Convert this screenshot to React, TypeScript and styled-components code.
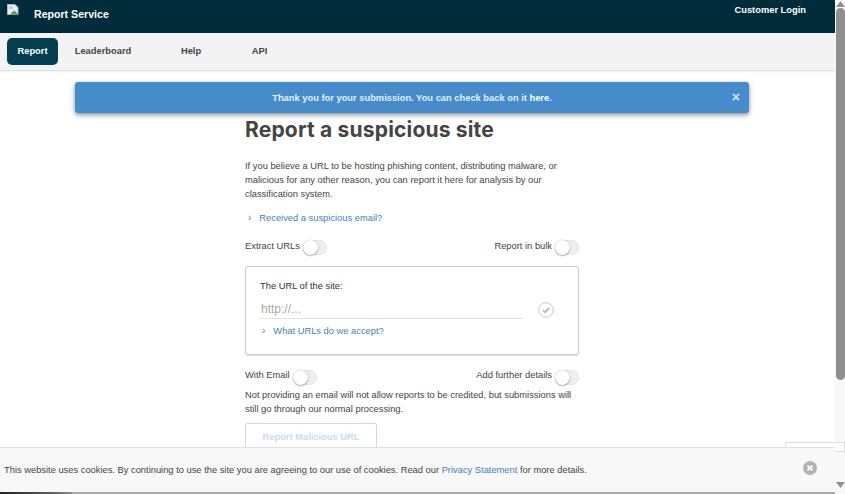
import React from "react";
import styled, { createGlobalStyle } from "styled-components";

const Global = createGlobalStyle`
  html, body { margin: 0; padding: 0; height: 100%; overflow: hidden; background: #fff; }
  * { box-sizing: border-box; }
  body { font-family: "Liberation Sans", Arial, sans-serif; font-size: 9.33px; color: #444; }
`;

const Page = styled.div`
  position: relative;
  display: flex;
  width: 845px;
  height: 494px;
  overflow: hidden;
`;
const Main = styled.div`
  width: 835px;
  display: flex;
  flex-direction: column;
  flex: none;
`;
const Header = styled.header`
  height: 33px;
  flex: none;
  background: #012c3b;
  display: flex;
  justify-content: space-between;
  color: #fff;
  font-weight: 700;
  padding: 0 29px 0 7px;
`;
const Brand = styled.div`
  display: flex;
  align-items: flex-start;
  gap: 11px;
  font-size: 10.6px;
  line-height: 12px;
  padding-top: 7.5px;
`;
const BrokenImg = styled.svg`
  width: 16px;
  height: 11px;
  margin-top: -3.5px;
  flex: none;
`;
const Login = styled.div`
  font-size: 9.33px;
  line-height: 12px;
  padding-top: 4px;
`;
const Nav = styled.nav`
  height: 38px;
  flex: none;
  background: #f3f3f3;
  border-bottom: 1px solid #e2e2e2;
  box-shadow: 0 1px 2px rgba(0, 0, 0, 0.06);
  display: flex;
  align-items: flex-start;
  padding: 5px 0 0 7px;
  font-size: 9.33px;
  font-weight: 700;
`;
const Tab = styled.div<{ $w: number; $active?: boolean }>`
  width: ${(p) => p.$w}px;
  height: 27px;
  line-height: 27px;
  text-align: center;
  border-radius: 5px;
  color: ${(p) => (p.$active ? "#fff" : "#444")};
  background: ${(p) => (p.$active ? "#033e51" : "transparent")};
`;
const Content = styled.main`
  width: 334px;
  margin-left: 245px;
  padding-top: 46px;
  line-height: 14px;
`;
const Title = styled.h1`
  margin: 0;
  font-family: "Inter", "Liberation Sans", sans-serif;
  font-weight: 700;
  font-size: 21px;
  line-height: 26px;
  letter-spacing: 0.18px;
  color: #444;
  white-space: nowrap;
`;
const Para = styled.p`
  margin: 16px 0 0;
  color: #444;
  white-space: nowrap;
`;
const MoreLink = styled.div<{ $indent: number; $top: number; $gap: number }>`
  display: flex;
  align-items: center;
  gap: ${(p) => p.$gap}px;
  margin: ${(p) => p.$top}px 0 0 ${(p) => p.$indent}px;
  color: #3f7fc0;
  line-height: 12px;
`;
const Chevron = styled.span`
  color: #777;
  font-size: 10px;
  line-height: 10px;
`;
const ToggleRow = styled.div<{ $top: number; $h: number }>`
  display: flex;
  justify-content: space-between;
  margin-top: ${(p) => p.$top}px;
  height: ${(p) => p.$h}px;
`;
const ToggleField = styled.label<{ $lift?: boolean }>`
  display: flex;
  align-items: flex-start;
  gap: 3px;
  line-height: 14px;
`;
const Switch = styled.span<{ $drop: number }>`
  display: block;
  position: relative;
  width: 24px;
  height: 15px;
  margin-top: ${(p) => p.$drop}px;
  border-radius: 8px;
  background: #eee;
  border: 1px solid #e4e4e4;
  &::after {
    content: "";
    position: absolute;
    left: -1px;
    top: -1px;
    width: 15px;
    height: 15px;
    border-radius: 50%;
    background: #fff;
    box-shadow: 0 1px 1.5px rgba(0, 0, 0, 0.28), 0 0 0 0.5px rgba(0, 0, 0, 0.14);
  }
`;
const UrlCard = styled.section`
  margin-top: 10px;
  height: 89px;
  border: 1px solid #c8c8c8;
  border-radius: 3px;
  box-shadow: 0 1px 1px rgba(0, 0, 0, 0.12);
  padding: 12px 14px 0;
`;
const CardLabel = styled.div`
  line-height: 14px;
  color: #333;
`;
const InputRow = styled.div`
  display: flex;
  align-items: center;
  gap: 15px;
  margin-top: 5px;
`;
const UrlInput = styled.div`
  width: 263px;
  height: 21px;
  border-bottom: 1px solid #e2e2e2;
  color: #a8a8a8;
  font-size: 12px;
  line-height: 22px;
  padding-left: 1px;
`;
const CheckIcon = styled.svg`
  width: 16px;
  height: 16px;
  flex: none;
  margin-top: 2px;
`;
const Note = styled.p`
  margin: 1px 0 0;
  line-height: 14px;
  color: #444;
  white-space: nowrap;
`;
const SubmitBtn = styled.button`
  display: block;
  margin-top: 7px;
  width: 132px;
  height: 28px;
  background: #fff;
  border: 1px solid #c5dcef;
  border-radius: 2px;
  color: #c5dcef;
  font: 700 9.33px "Liberation Sans", Arial, sans-serif;
  padding: 0;
`;
const Alert = styled.div`
  position: absolute;
  left: 75px;
  top: 82px;
  width: 674px;
  height: 31px;
  padding-top: 1px;
  background: #468bca;
  border-radius: 3px;
  box-shadow: 0 2px 5px rgba(0, 0, 0, 0.45);
  color: #fff;
  display: flex;
  align-items: center;
  justify-content: center;
`;
const AlertText = styled.span`
  color: #e6f0f9;
  font-weight: 700;
  b { color: #fff; }
`;
const AlertClose = styled.span`
  position: absolute;
  right: 9px;
  top: 8px;
  font-size: 14px;
  line-height: 14px;
  font-weight: 700;
  color: #d5e4f2;
`;
const Recaptcha = styled.div`
  position: absolute;
  left: 785px;
  top: 442px;
  width: 60px;
  height: 10px;
  background: #fff;
  border: 1px solid #ddd;
  border-radius: 2px 0 0 0;
`;
const CookieBar = styled.div`
  position: absolute;
  left: 0;
  top: 447px;
  width: 835px;
  height: 45px;
  background: #f8f8f8;
  border-top: 1px solid #e0e0e0;
  display: flex;
  align-items: center;
  justify-content: space-between;
  padding: 0 18px 0 4px;
  color: #444;
`;
const CookieLink = styled.span`
  color: #3f7fc0;
`;
const CookieClose = styled.svg`
  width: 14px;
  height: 14px;
  flex: none;
  margin-top: -4px;
`;
const BottomEdge = styled.div`
  position: absolute;
  left: 0;
  top: 492px;
  width: 835px;
  height: 2px;
  background: linear-gradient(to right, #222 0, #555 45px, #888 72px, #aaa 72px);
`;
const ScrollTrack = styled.div`
  position: relative;
  width: 10px;
  height: 494px;
  flex: none;
  background: #f8f8f8;
`;
const ScrollThumb = styled.div`
  position: absolute;
  left: 1px;
  top: 8px;
  width: 9px;
  height: 372px;
  border-radius: 5px;
  background: #8f8f8f;
`;
const ScrollArrow = styled.svg<{ $top: number }>`
  position: absolute;
  left: 1px;
  top: ${(p) => p.$top}px;
  width: 9px;
  height: 6px;
`;

const Toggle = ({ label, drop }: { label: string; drop: number }) => (
  <ToggleField>
    {label}
    <Switch $drop={drop} />
  </ToggleField>
);

export default function App() {
  return (
    <Page>
      <Global />
      <Main>
        <Header>
          <Brand>
            <BrokenImg viewBox="0 0 16 11">
              <path d="M0.5 0.5H8L11 3.5V10.5H0.5Z" fill="#e8edf3" stroke="#b5b5b5" />
              <path d="M3 10.5L7 6.5L9 8L11 10.5Z" fill="#4f9e45" />
              <path d="M1.5 2H6V5H1.5Z" fill="#bcd3ee" />
            </BrokenImg>
            Report Service
          </Brand>
          <Login>Customer Login</Login>
        </Header>
        <Nav>
          <Tab $w={51} $active>Report</Tab>
          <Tab $w={90}>Leaderboard</Tab>
          <Tab $w={86}>Help</Tab>
          <Tab $w={51}>API</Tab>
        </Nav>
        <Content>
          <Title>Report a suspicious site</Title>
          <Para>
            If you believe a URL to be hosting phishing content, distributing malware, or
            <br />
            malicious for any other reason, you can report it here for analysis by our
            <br />
            classification system.
          </Para>
          <MoreLink $indent={3} $top={11} $gap={8}>
            <Chevron>›</Chevron>
            Received a suspicious email?
          </MoreLink>
          <ToggleRow $top={15} $h={17}>
            <Toggle label="Extract URLs" drop={1} />
            <Toggle label="Report in bulk" drop={1} />
          </ToggleRow>
          <UrlCard>
            <CardLabel>The URL of the site:</CardLabel>
            <InputRow>
              <UrlInput>http://...</UrlInput>
              <CheckIcon viewBox="0 0 16 16">
                <circle cx="8" cy="8" r="7.3" fill="none" stroke="#c9c9c9" />
                <path d="M4.8 8.2L7 10.2L11.3 6" fill="none" stroke="#bbb" strokeWidth="1.8" />
              </CheckIcon>
            </InputRow>
            <MoreLink $indent={2} $top={6} $gap={8}>
              <Chevron>›</Chevron>
              What URLs do we accept?
            </MoreLink>
          </UrlCard>
          <ToggleRow $top={13} $h={19}>
            <Toggle label="With Email" drop={2} />
            <Toggle label="Add further details" drop={2} />
          </ToggleRow>
          <Note>
            Not providing an email will not allow reports to be credited, but submissions will
            <br />
            still go through our normal processing.
          </Note>
          <SubmitBtn>Report Malicious URL</SubmitBtn>
        </Content>
      </Main>
      <ScrollTrack>
        <ScrollArrow $top={1} viewBox="0 0 9 6">
          <path d="M4.5 0L9 6H0Z" fill="#8f8f8f" />
        </ScrollArrow>
        <ScrollThumb />
        <ScrollArrow $top={482} viewBox="0 0 9 6">
          <path d="M0 0H9L4.5 6Z" fill="#8f8f8f" />
        </ScrollArrow>
      </ScrollTrack>
      <Alert>
        <AlertText>
          Thank you for your submission. You can check back on it <b>here</b>.
        </AlertText>
        <AlertClose>×</AlertClose>
      </Alert>
      <Recaptcha />
      <CookieBar>
        <span>
          This website uses cookies. By continuing to use the site you are agreeing to our use of cookies. Read our{" "}
          <CookieLink>Privacy Statement</CookieLink> for more details.
        </span>
        <CookieClose viewBox="0 0 14 14">
          <circle cx="7" cy="7" r="7" fill="#b3b3b3" />
          <path d="M4.6 4.6L9.4 9.4M9.4 4.6L4.6 9.4" stroke="#fff" strokeWidth="2" />
        </CookieClose>
      </CookieBar>
      <BottomEdge />
    </Page>
  );
}
